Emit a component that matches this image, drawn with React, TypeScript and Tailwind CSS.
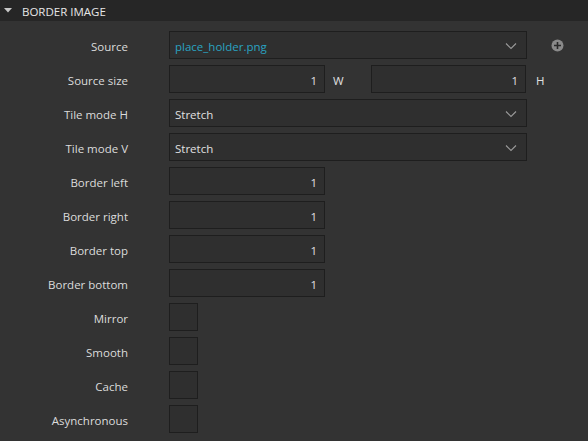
import React from "react";

const Chevron = () => (
  <svg width="12" height="8" viewBox="0 0 12 8" className="ml-auto mr-[9px] mt-[1px]">
    <path d="M1 1.5 L6 6.5 L11 1.5" fill="none" stroke="#9a9a9a" strokeWidth="1.1" />
  </svg>
);

const Label = ({ children }: { children: React.ReactNode }) => (
  <div className="w-[128px] shrink-0 pt-[3px] text-right text-[11.5px] text-[#dcdcdc]">{children}</div>
);

const Row = ({ label, children }: { label: string; children: React.ReactNode }) => (
  <div className="flex h-[28px] items-center">
    <Label>{label}</Label>
    <div className="ml-[41px] flex h-full items-center">{children}</div>
  </div>
);

const NumBox = ({ w = 156 }: { w?: number }) => (
  <div
    className={`flex h-[28px] items-center justify-end border border-[#1e1e1e] bg-[#2f2f2f] pr-[7px] pt-[3px] text-[11.5px] text-[#e0e0e0] ${
      w === 156 ? "w-[156px]" : "w-[155px]"
    }`}
  >
    1
  </div>
);

const Combo = ({ text, color = "#e0e0e0" }: { text: string; color?: string }) => (
  <div className="flex h-[28px] w-[358px] items-center border border-[#1e1e1e] bg-[#2f2f2f] pl-[5px] text-[11.5px]">
    <span className="pt-[3px]" style={{ color }}>
      {text}
    </span>
    <Chevron />
  </div>
);

const Check = () => <div className="h-[28px] w-[29px] border border-[#1e1e1e] bg-[#2f2f2f]" />;

export default function App() {
  return (
    <div
      className="h-[441px] w-[588px] overflow-hidden bg-[#333333]"
      style={{ fontFamily: '"Open Sans", "Noto Sans", sans-serif' }}
    >
      <div className="flex h-[21px] items-center bg-[#262626]">
        <svg width="8" height="5" viewBox="0 0 8 5" className="ml-[4px]">
          <path d="M0 0 L8 0 L4 4.5 Z" fill="#c8c8c8" />
        </svg>
        <span className="ml-[10px] pt-[2px] text-[11.5px] text-[#e6e6e6]">BORDER IMAGE</span>
      </div>
      <div className="flex flex-col gap-[6px] pt-[10px]">
        <Row label="Source">
          <Combo text="place_holder.png" color="#2aa3c2" />
          <svg width="13" height="13" viewBox="0 0 13 13" className="ml-[24px] mt-[1px]">
            <circle cx="6.5" cy="6.5" r="6" fill="#8a8a8a" />
            <path d="M6.5 3 V10 M3 6.5 H10" stroke="#2a2a2a" strokeWidth="1.6" />
          </svg>
        </Row>
        <Row label="Source size">
          <NumBox />
          <span className="ml-[8px] w-[38px] pt-[3px] text-[11.5px] text-[#e0e0e0]">W</span>
          <NumBox w={155} />
          <span className="ml-[10px] pt-[3px] text-[11.5px] text-[#e0e0e0]">H</span>
        </Row>
        <Row label="Tile mode H">
          <Combo text="Stretch" />
        </Row>
        <Row label="Tile mode V">
          <Combo text="Stretch" />
        </Row>
        <Row label="Border left">
          <NumBox />
        </Row>
        <Row label="Border right">
          <NumBox />
        </Row>
        <Row label="Border top">
          <NumBox />
        </Row>
        <Row label="Border bottom">
          <NumBox />
        </Row>
        <Row label="Mirror">
          <Check />
        </Row>
        <Row label="Smooth">
          <Check />
        </Row>
        <Row label="Cache">
          <Check />
        </Row>
        <Row label="Asynchronous">
          <Check />
        </Row>
      </div>
    </div>
  );
}
